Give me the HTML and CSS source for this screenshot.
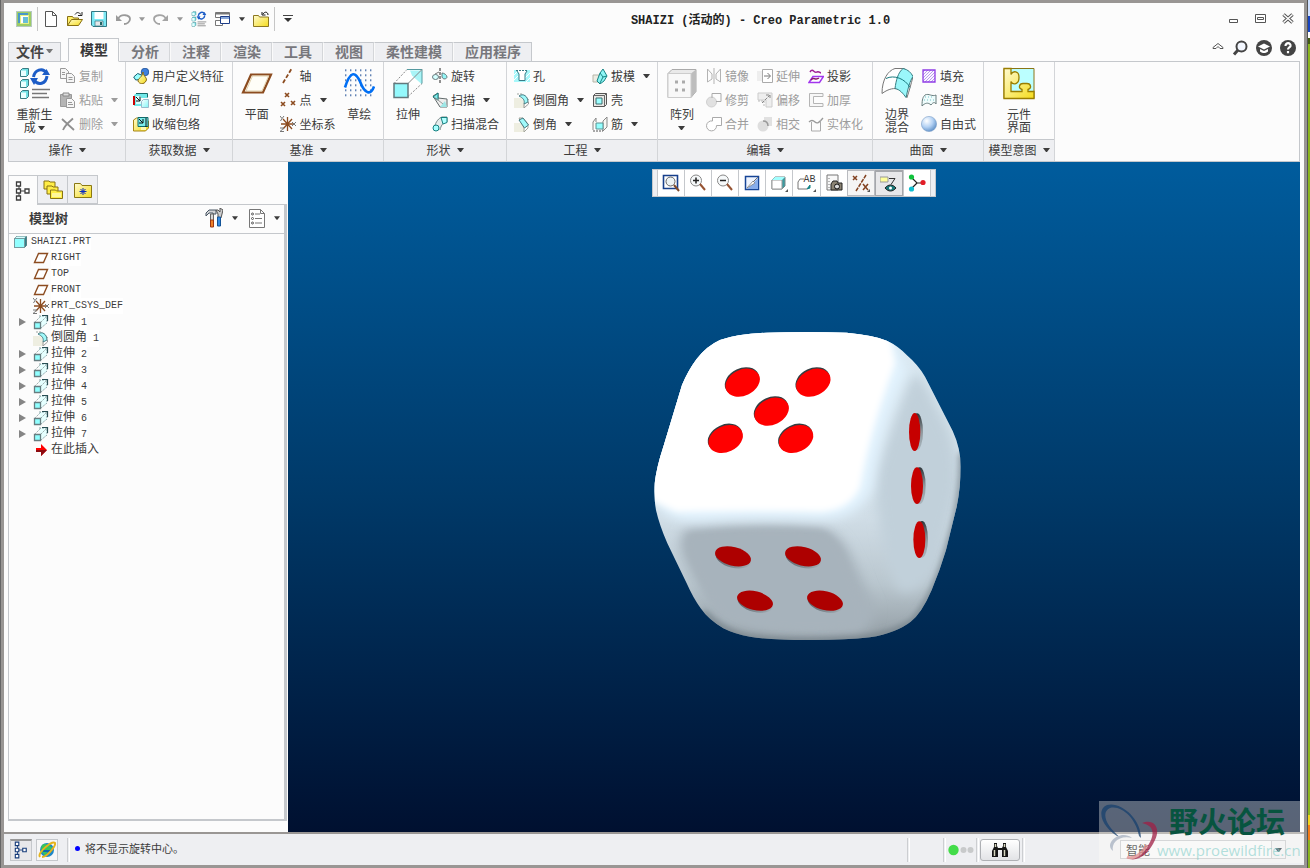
FILE: index.html
```
<!DOCTYPE html>
<html lang="zh-CN">
<head>
<meta charset="utf-8">
<title>SHAIZI (活动的) - Creo Parametric 1.0</title>
<link rel="stylesheet" href="styles.css">
</head>
<body>
<svg class="defs" aria-hidden="true">
  <defs>
    <linearGradient id="gYellow" x1="0" y1="0" x2="1" y2="1"><stop offset="0" stop-color="#fffbd0"/><stop offset="1" stop-color="#f5dc1c"/></linearGradient>
    <linearGradient id="gCyan" x1="0" y1="0" x2="1" y2="1"><stop offset="0" stop-color="#ffffff"/><stop offset="1" stop-color="#7ff6f6"/></linearGradient>
    <radialGradient id="gBall" cx=".35" cy=".3" r=".8"><stop offset="0" stop-color="#ffffff"/><stop offset=".5" stop-color="#b4d2f4"/><stop offset="1" stop-color="#5286c0"/></radialGradient>
    <pattern id="pDots" width="5" height="5" patternUnits="userSpaceOnUse"><rect x="2" y="2" width="1.400" height="1.400" fill="#1f4f96"/></pattern>
    <pattern id="pHatch" width="3" height="3" patternUnits="userSpaceOnUse"><path d="M0 3L3 0" stroke="#a884e8" stroke-width=".8"/></pattern>
  </defs>
  <symbol id="arrow" viewBox="0 0 7 4"><path d="M0 0h7L4 4H3z" fill="currentColor"/></symbol>
  <symbol id="new" viewBox="0 0 16 16"><path d="M2.500 .5h7l4 4v11h-11zM9.500 .5v4h4" fill="#fff" stroke="#555"/></symbol>
  <symbol id="open" viewBox="0 0 16 16"><path d="M.5 14.500v-9h5l1 1.500h5v2" fill="#ffef6a" stroke="#876f14"/><path d="M.5 14.500l4-6h11l-4 6z" fill="url(#gYellow)" stroke="#876f14"/><path d="M8 3.500c2-3 4-2 6 0M15 1v3.500h-4" fill="none" stroke="#222"/></symbol>
  <symbol id="save" viewBox="0 0 16 16"><path d="M.5 .5h15v15H2l-1.500-1.500z" fill="#7ce8f4" stroke="#347783"/><path d="M3.500 1h9v7h-9z" fill="#fff"/><path d="M4 10h8v5H4z" fill="#e4e8ea" stroke="#347783" stroke-width=".7"/><path d="M9 11h2v3H9z" fill="#266"/></symbol>
  <symbol id="undo" viewBox="0 0 16 16"><path d="M3 8c3-6 12-4 12 0 0 3-3 5-6 5" fill="none" stroke="#9a9a9a" stroke-width="1.800"/><path d="M1 4v6h6z" fill="#9a9a9a"/></symbol>
  <symbol id="redo" viewBox="0 0 16 16"><path d="M13 8C10 2 1 4 1 8c0 3 3 5 6 5" fill="none" stroke="#a4a4a4" stroke-width="1.800"/><path d="M15 4v6H9z" fill="#a4a4a4"/></symbol>
  <symbol id="regen" viewBox="0 0 32 33"><g stroke="#397b82" fill="#6fe0e4"><path d="M1.500 3.500l2-2h6v6l-2 2h-6z"/><path d="M1.500 14.500l2-2h6v6l-2 2h-6z"/><path d="M1.500 25.500l2-2h6v6l-2 2h-6z"/></g><g fill="#e9ffff"><path d="M2 3.500h5v5.500H2zM2 14.500h5v5.500H2zM2 25.500h5v5.500H2z"/></g><path d="M14.500 10c1-7 9-10 13-4M28 9c-1 8-9 10-13 4" fill="none" stroke="#1d5dc7" stroke-width="3"/><path d="M23 8h8l-3.500-6zM11 11h8l-4 7z" fill="#1d5dc7"/><path d="M13 22.500h18M13 26.500h15M13 30.500h17" stroke="#777" stroke-width="1.600"/></symbol>
  <symbol id="windows" viewBox="0 0 16 16"><path d="M.5 1.500h14v5H.5zM.5 9.500h7v5h-7z" fill="#fff" stroke="#777"/><path d="M1 2h13v1.500H1z" fill="#777"/><path d="M5.500 5.500h9v7h-9z" fill="#fff" stroke="#1d3d88"/><path d="M6 6h8v2H6z" fill="#89a9da"/></symbol>
  <symbol id="closeFolder" viewBox="0 0 16 16"><path d="M.5 15.500v-11h5l1 1.500h9v9.500z" fill="url(#gYellow)" stroke="#8d7820"/><path d="M10 3c2-3 5-2 5 1M9 1v3h3.500" fill="none" stroke="#111"/></symbol>
  <symbol id="copy" viewBox="0 0 16 16"><g fill="#f5f5f5" stroke="#999"><path d="M.5 .5h5l3 3v7h-8z"/><path d="M6.500 5.500h5l3 3v6h-8z"/></g><path d="M2 4.500h3M2 6.500h3M8.500 9.500h4M8.500 11.500h4" stroke="#999"/></symbol>
  <symbol id="paste" viewBox="0 0 16 16"><path d="M.5 2.500h11v12H.5z" fill="#b4b4b4" stroke="#999"/><path d="M3 1h6v3H3z" fill="#ddd" stroke="#888"/><path d="M6.500 6.500h5l3 3v6h-8z" fill="#f6f6f6" stroke="#999"/><path d="M8 10.500h4M8 12.500h5" stroke="#999"/></symbol>
  <symbol id="delete" viewBox="0 0 16 16"><path d="M2 3l12 11M13 2.500C9 6 5 9 3 14" fill="none" stroke="#8f8f8f" stroke-width="1.800"/></symbol>
  <symbol id="udf" viewBox="0 0 16 16"><circle cx="12" cy="4" r="3.800" fill="#3f80dc" stroke="#174a91" stroke-width=".8"/><path d="M.7 9l4-3.500 5 2-2 4-5 .5z" fill="#9ff" stroke="#125e70"/><path d="M10 4c0 4 5 6 3 9-2 4-7 3-8 0 0-3 4-3 5-9z" fill="url(#gYellow)" stroke="#866812"/></symbol>
  <symbol id="copyGeom" viewBox="0 0 16 16"><path d="M1 3l3-2h10v5H8v8H1z" fill="#71e8e8"/><path d="M3 1.500h11.500v4" fill="none" stroke="#176969"/><path d="M1 4v9" stroke="#c00" stroke-width="2"/><path d="M3 4h5v8H3z" fill="#d9ffff"/><path d="M3 5l4 4M7 4.500V9H3" stroke="#111" fill="none"/><path d="M8.500 9.500l2-2h5v8h-7z" fill="url(#gCyan)" stroke="#9bc"/></symbol>
  <symbol id="shrink" viewBox="0 0 16 16"><path d="M.5 4l3-2h3v3h9v7l-3 3H.5z" fill="url(#gYellow)" stroke="#a68415"/><path d="M5 1.500h10v9H5z" fill="#7aecec" stroke="#126a6a"/><path d="M6 3l4 4M10 3v4H6M13 2v9" stroke="#111" fill="none"/><path d="M8 11h5v3H8z" fill="#fff8b0"/></symbol>
  <symbol id="plane" viewBox="0 0 32 24"><path d="M2 21L10 3h20l-8 18z" fill="#fffef8" stroke="#8c4c20" stroke-width="2.200"/><path d="M5 19.500L11.500 4.500h16L21 19.500z" fill="none" stroke="#d9c59a" stroke-width=".8"/></symbol>
  <symbol id="axis" viewBox="0 0 16 16"><path d="M3 15L12 0" stroke="#8c4c20" stroke-width="1.800" stroke-dasharray="4 2"/></symbol>
  <symbol id="points" viewBox="0 0 16 16"><path d="M5 1l4 4m0-4L5 5M1 10l4 4m0-4l-4 4M11 9l4 4m0-4l-4 4" stroke="#8c4c20" stroke-width="1.600"/></symbol>
  <symbol id="csys" viewBox="0 0 16 16"><path d="M1 8h12M7.500 1v14M3 3l9 10M12 3L3 13" stroke="#8c4c20" stroke-width="1.300"/><path d="M0 0l2 2.500L4 0M2 2.500L.5 5M12 6l4 4m0-4l-4 4M0 12h4l-4 3.500h4" fill="none" stroke="#777"/></symbol>
  <symbol id="sketch" viewBox="0 0 32 32"><path d="M1 1h30v30H1z" fill="url(#pDots)"/><path d="M2 20C7 4 12 3 17 14c5 13 11 14 14 5" fill="none" stroke="#006ff5" stroke-width="2.600"/></symbol>
  <symbol id="extrude" viewBox="0 0 32 32"><path d="M14 3L2 16v14l14-13zM16 17h14V3H15z" fill="#fff"/><path d="M18 3h12v14L20 8z" fill="#a9f5f7"/><path d="M2 16L15 2M16 29L30 16" stroke="#888" stroke-dasharray="2 1.500"/><path d="M15 2h15v14" fill="none" stroke="#559aa0"/><path d="M16 16L30 2" stroke="#888"/><path d="M2 16h14v14H2z" fill="#94f9fc" stroke="#63797d" stroke-width="1.500"/></symbol>
  <symbol id="extrudeS" viewBox="0 0 16 16"><path d="M6 2h8v7L8 14" fill="#e5ffff" stroke="#90a6aa" stroke-dasharray="2 1"/><path d="M9 1.500h5.500V7" fill="none" stroke="#274e54" stroke-width="1.200"/><path d="M1.500 8.500h6v6h-6z" fill="#90ffff" stroke="#687d80" stroke-width="1.300"/><path d="M2 8l6-6M8 8l6-6" stroke="#9aa" stroke-dasharray="2 1"/></symbol>
  <symbol id="revolve" viewBox="0 0 16 16"><path d="M8 0v16" stroke="#222" stroke-dasharray="3 1"/><path d="M10 5c2 0 5 2 5 4s-4 3-5 0z" fill="#93f6f6" stroke="#66797c"/><ellipse cx="3.500" cy="9" rx="3" ry="2.500" fill="#d5ffff" stroke="#66797c"/><path d="M3 6l4-2" stroke="#777"/></symbol>
  <symbol id="sweep" viewBox="0 0 16 16"><path d="M1 4l5-3v5l9 1v8H8z" fill="#eee" stroke="#626b6c"/><path d="M1 5l5-4v7z" fill="#82eeee" stroke="#137878"/><path d="M2 5l13 10" stroke="#999"/><path d="M8 15l5-6 2 6z" fill="#9ee7e7"/></symbol>
  <symbol id="sweepBlend" viewBox="0 0 16 16"><path d="M2 12C4 5 7 2 10 1h5v5c-5 1-6 4-7 8" fill="#e7ecec" stroke="#788"/><path d="M9 1.500h6v5L11 8z" fill="#b2ffff" stroke="#168080"/><circle cx="4" cy="12" r="3" fill="#a7ffff" stroke="#168080"/></symbol>
  <symbol id="hole" viewBox="0 0 16 16"><path d="M0 2h16v12H0z" fill="#a6f7fa"/><path d="M0 7l4-4M0 12L4 8M11 10l5-5M12 14l4-4" stroke="#fff"/><path d="M3 2h10l-2 4v7H5V6z" fill="#fff"/><path d="M2 2.500h12" stroke="#397c87" stroke-dasharray="2 1"/><path d="M3 3l2 3v6.500h6V6l2-3" fill="none" stroke="#397c87"/></symbol>
  <symbol id="round" viewBox="0 0 16 16"><path d="M0 6h8l3 6-1 4H0z" fill="#eeeee1"/><path d="M3 2h5l7 6" fill="none" stroke="#a1a6a0" stroke-dasharray="2 1"/><path d="M5 4c4-3 9 0 9 6l-4 2c1-4-1-6-5-8z" fill="#9ff9fa" stroke="#477b82"/><path d="M10 12v4l4.500-4v-2" fill="none" stroke="#999"/></symbol>
  <symbol id="chamfer" viewBox="0 0 16 16"><path d="M0 7h8l3 5-1 4H0z" fill="#eeeee1"/><path d="M5 2h4l5 6v4l-4 4v-4z" fill="#fff" stroke="#a4a69c"/><path d="M5 4l4-2 5.500 7-4 3z" fill="#9ff9fa" stroke="#477b82"/></symbol>
  <symbol id="draft" viewBox="0 0 16 16"><path d="M1 7h6v7H1z" fill="#ecece3" stroke="#b6b6a9"/><path d="M5 13L8 5l3-4 4 7-3 5-4 3z" fill="#8df5f5" stroke="#168484"/><path d="M8 5l3 4 4-1M11 9l-3 6" fill="none" stroke="#168484"/></symbol>
  <symbol id="shell" viewBox="0 0 16 16"><path d="M1.500 3.500l2-2h11v11l-2 2h-11z" fill="#e8e8e5" stroke="#555"/><path d="M1.500 3.500h11v11M12.500 3.500l2-2" fill="none" stroke="#666"/><path d="M4 6h6v6H4z" fill="#9cffff" stroke="#3e6f70"/></symbol>
  <symbol id="rib" viewBox="0 0 16 16"><path d="M1 14V6l3-4v4M11 5l4-4v10l-4 4z" fill="#f8f8f4" stroke="#888"/><path d="M4 7h7v6H4z" fill="#93ffff" stroke="#5b9090"/><path d="M1 15h10" stroke="#555" stroke-dasharray="2 1"/></symbol>
  <symbol id="pattern" viewBox="0 0 32 32"><path d="M2 6l4-4h24v22l-5 6H2z" fill="#e9e9e9" stroke="#aaa"/><path d="M25 6l5-4v22l-5 6z" fill="#bdbdbd"/><path d="M2 6h23v24H2z" fill="#f8f8f8" stroke="#ccc"/><g fill="#aaa"><path d="M9 13h3v3H9zM16 13h3v3h-3zM9 21h3v3H9zM16 21h3v3h-3z"/></g></symbol>
  <symbol id="mirror" viewBox="0 0 16 16"><path d="M1.500 1v13L6 11V6zM14.500 1v13L10 11V6zM8 0v16" fill="none" stroke="#b3b3b3"/></symbol>
  <symbol id="trim" viewBox="0 0 16 16"><circle cx="5.500" cy="10" r="5" fill="#e1e1e1" stroke="#d0d0d0"/><path d="M6 6V1.500h9v8h-5" fill="none" stroke="#aaa"/></symbol>
  <symbol id="merge" viewBox="0 0 16 16"><path d="M6.500 5V1.500h9v8h-5A5 5 0 1 1 6.500 5z" fill="#fff" stroke="#aaa"/></symbol>
  <symbol id="extend" viewBox="0 0 16 16"><path d="M0 3h5v10H0z" fill="#eee"/><path d="M5.500 1.500h10v13h-10z" fill="#fff" stroke="#aaa"/><path d="M7 8h6M10.500 5l3 3-3 3" fill="none" stroke="#777"/></symbol>
  <symbol id="offset" viewBox="0 0 16 16"><path d="M1 1h14v14H9V8H1z" fill="#eee" stroke="#ccc"/><path d="M1 9h6v6" fill="none" stroke="#bbb" stroke-dasharray="2 1"/><path d="M5 11l8-8M9 3h4v4" stroke="#888" fill="none" stroke-dasharray="3 1"/></symbol>
  <symbol id="intersect" viewBox="0 0 16 16"><path d="M7 1h8v9H7z" fill="#e1e1e1"/><circle cx="6" cy="10" r="5.500" fill="#dedede"/><path d="M6 5c3 0 5 2 5 5" fill="none" stroke="#999" stroke-width="1.500"/></symbol>
  <symbol id="project" viewBox="0 0 16 16"><path d="M2 4c3-5 4 2 7 0 2-1 3 1 4 1" fill="none" stroke="#a01e96" stroke-width="1.500"/><path d="M1 14.500l4-6h10.500l-4 6z" fill="#fff" stroke="#a235ed" stroke-width="1.500"/><path d="M3 12c3-4 4 1 8-2" fill="none" stroke="#8b1a69" stroke-width="1.500"/></symbol>
  <symbol id="thicken" viewBox="0 0 16 16"><path d="M15 1.500H1.500v13H15v-3H5.500v-7H15z" fill="#f7f7f7" stroke="#b5b5b5"/></symbol>
  <symbol id="solidify" viewBox="0 0 16 16"><path d="M1 6c2-2 4-2 6 0s4 1 8-4" fill="none" stroke="#999" stroke-width="1.300"/><path d="M3.500 6v9h9V4" fill="none" stroke="#aaa"/></symbol>
  <symbol id="boundary" viewBox="0 0 32 32"><path d="M1 26C1 12 7 3 14 1h9l9 8c-2 8-4 15-6 21-5-10-14-12-25-4z" fill="#fff" stroke="#777"/><path d="M22 1c5 1 8 4 10 8-3 4-5 12-7 21-3-4-6-8-11-9 1-8 3-16 8-20z" fill="#9af7fa" stroke="#397e83"/><path d="M5 11c8-4 19 0 24 9" fill="none" stroke="#17797d"/></symbol>
  <symbol id="fill" viewBox="0 0 16 16"><path d="M2 2h12v12H2z" fill="#faf7ff"/><path d="M2 2h12v12H2z" fill="url(#pHatch)" stroke="#8e3ce5" stroke-width="1.300"/></symbol>
  <symbol id="style" viewBox="0 0 16 16"><path d="M1 14c0-7 1-9 3-11 4-2 7 2 11 0v9c-1-2-3-2-5 1-3-3-6-2-9 1z" fill="#effcfc" stroke="#677c7d"/><path d="M4 5h9M3 8h10" stroke="#74c5c9" stroke-dasharray="1 2"/></symbol>
  <symbol id="ball" viewBox="0 0 16 16"><circle cx="8" cy="8" r="7.600" fill="url(#gBall)" stroke="#7e9fc8" stroke-width=".6"/></symbol>
  <symbol id="puzzle" viewBox="0 0 32 32"><path d="M1 1h30v30H1z" fill="#bff" stroke="#8a7516"/><path d="M1 1h7v6c2-4 8-4 8 3s-6 8-8 4v10h11v-2c-4-1-3-6 1-6h4c4 0 5 5 1 6v2h6v7H1z" fill="url(#gYellow)" stroke="#9a7e00" stroke-width="1.300"/></symbol>
  <symbol id="tree" viewBox="0 0 16 20"><path d="M4 5v10M4 10h6" stroke="currentColor"/><g fill="#fff" stroke="currentColor" stroke-width="1.300"><path d="M1.500 1h4v4h-4zM1.500 8h4v4h-4zM1.500 15h4v4h-4zM10 8h4v4h-4z"/></g></symbol>
  <symbol id="folders" viewBox="0 0 20 20"><g fill="#ffee46" stroke="#887313"><path d="M1 9V1h5l1 1h5v7z"/><path d="M4 14V6h5l1 1h5v7z"/><path d="M7.500 18.500V10h5l1 1h6v7.500z"/></g><path d="M9 13h9v4H9z" fill="#fff69c"/></symbol>
  <symbol id="favorites" viewBox="0 0 18 16"><path d="M.5 15.500v-14h6l1.500 2h9.500v12z" fill="url(#gYellow)" stroke="#8a7812"/><path d="M9 6v7M5.500 9.500h7M6.500 7l5 5M11.500 7l-5 5" stroke="#0929bd"/></symbol>
  <symbol id="tools" viewBox="0 0 18 20"><path d="M1 5l3-3h7v4H8v-1H4L1 8z" fill="#d2d3d6" stroke="#465462"/><path d="M5.500 6h3v7h-3z" fill="#d7d7d7" stroke="#666"/><path d="M5.500 12h3v7h-3z" fill="#ef8128" stroke="#9a3715"/><path d="M13 10V6l-2-4h2l2 2V0l3 2-1 4-1 4" fill="#ccc" stroke="#555"/><path d="M12.500 9h3v9h-3z" fill="#348be3" stroke="#125397"/></symbol>
  <symbol id="list" viewBox="0 0 16 19"><path d="M.5.5h11l4 4v14H.5zM11.500.5v4h4" fill="#fff" stroke="#777"/><path d="M6 5h5M6 9.500h7M6 14h7" stroke="#777"/><g fill="#fff" stroke="#555"><circle cx="3.500" cy="5" r="1"/><circle cx="3.500" cy="9.500" r="1"/><circle cx="3.500" cy="14" r="1"/></g></symbol>
  <symbol id="part" viewBox="0 0 16 16"><path d="M1.500 4.500l2-2h10v9l-2 2h-10z" fill="#30828a" stroke="#588085"/><path d="M1.500 4.500h10v9h-10z" fill="#92ffff" stroke="#759b9f"/><path d="M2 4l2-1.500h9L11.500 4z" fill="#d8ffff"/></symbol>
  <symbol id="planeS" viewBox="0 0 16 16"><path d="M1.500 12.500l4-9h9l-4 9z" fill="#fff" stroke="#8c4c20" stroke-width="1.400"/></symbol>
  <symbol id="insert" viewBox="0 0 16 16"><path d="M3 6h5V2l6 6-6 6v-4H3z" fill="#f00"/><path d="M3 8h11l-6 6v-4H3z" fill="#8d0b10"/></symbol>
  <symbol id="refit" viewBox="0 0 18 18"><path d="M1.500 1.500h14v13h-14z" fill="#fff" stroke="#173f8b" stroke-width="1.600"/><circle cx="8.500" cy="7.500" r="4.500" fill="#edf3f5" stroke="#666"/><path d="M12 11l5 6" stroke="#7d492a" stroke-width="2"/></symbol>
  <symbol id="zoomIn" viewBox="0 0 18 18"><circle cx="7" cy="6.500" r="5.500" fill="#f6f9fa" stroke="#888"/><path d="M11 10l5 6" stroke="#965332" stroke-width="2"/><path d="M4 6.500h6M7 3.500v6" stroke="#222" stroke-width="1.500"/></symbol>
  <symbol id="zoomOut" viewBox="0 0 18 18"><circle cx="7" cy="6.500" r="5.500" fill="#f6f9fa" stroke="#888"/><path d="M11 10l5 6" stroke="#965332" stroke-width="2"/><path d="M4 6.500h6" stroke="#222" stroke-width="1.500"/></symbol>
  <symbol id="repaint" viewBox="0 0 18 18"><path d="M2.500 2.500h13v13h-13z" fill="#eef4ff" stroke="#174596" stroke-width="1.500"/><path d="M15 4L4 15h11z" fill="#87adeb"/><path d="M4 14l6-7 2 2z" fill="#fff" stroke="#777" stroke-width=".7"/><path d="M10 8l5-5" stroke="#777"/></symbol>
  <symbol id="display" viewBox="0 0 18 18"><path d="M2 6l3-3h10v9l-3 3H2z" fill="#3b9ca2" stroke="#788"/><path d="M2 6h10v9H2z" fill="#fff" stroke="#999"/><path d="M2 6l3-3h10l-3 3z" fill="#a3ffff"/><path d="M18 15v3h-3z" fill="#555"/></symbol>
  <symbol id="saved" viewBox="0 0 20 18"><path d="M1 15V8l2-3h4M1 15h9l3-3" fill="none" stroke="#777"/><path d="M10 15l3-4v3z" fill="#178689" stroke="#178689"/><path d="M19 15v3h-3z" fill="#555"/></symbol>
  <symbol id="camera" viewBox="0 0 18 18"><path d="M2 1h11v15H2z" fill="#f8f8f8" stroke="#777"/><path d="M4 4v10" stroke="#777" stroke-dasharray="1 2"/><path d="M6 10l2-3h4l1 2h4v7H6z" fill="#8b8474" stroke="#222"/><circle cx="12" cy="12.500" r="2.500" fill="#ddd" stroke="#111"/></symbol>
  <symbol id="datums" viewBox="0 0 18 18"><path d="M1 2l4 4m0-4L1 6M11 10l5 6m0-6l-5 6" stroke="#824221" stroke-width="1.500"/><path d="M4 17L14 1" stroke="#824221" stroke-width="1.500" stroke-dasharray="4 1"/><path d="M18 15v3h-3z" fill="#555"/></symbol>
  <symbol id="annot" viewBox="0 0 18 18"><path d="M0 2h8v5H0z" fill="#ffff9a" stroke="#999"/><path d="M9 3.500h6l-4 6" fill="none" stroke="#333"/><path d="M5 13c3-4 8-4 11 0-3 4-8 4-11 0z" fill="#197777" stroke="#222"/><circle cx="10.500" cy="13" r="1.500" fill="#fff"/></symbol>
  <symbol id="spin" viewBox="0 0 18 18"><path d="M3 3l6 6h6M9 9l-6 6" fill="none" stroke="#222" stroke-width="1.200"/><circle cx="3.500" cy="3" r="2.600" fill="#10c23c"/><circle cx="15" cy="8.500" r="2.600" fill="#e21d27"/><circle cx="3.500" cy="15" r="2.600" fill="#10bed0"/></symbol>
</svg>

<div class="window">
  <header class="titlebar">
    <div class="quick">
      <svg class="i16" viewBox="0 0 16 16"><path d="M0 0h16v16H0z" fill="#b5c9c0"/><path d="M1 1h14v14H1z" fill="#9dcc65"/><path d="M2 2h10v10H2z" fill="#4898c8"/><path d="M4 4h9v9H4z" fill="#e8ef85"/><path d="M5 5h7v7H5z" fill="#fff"/><path d="M7 6h5v6H7z" fill="#68bdd8"/></svg>
      <span class="vline"></span>
      <button aria-label="新建"><svg class="i16"><use href="#new"/></svg></button>
      <button aria-label="打开"><svg class="i16"><use href="#open"/></svg></button>
      <button aria-label="保存"><svg class="i16"><use href="#save"/></svg></button>
      <button aria-label="撤消"><svg class="i16"><use href="#undo"/></svg></button>
      <button class="off" aria-label="撤消列表"><svg class="arr6"><use href="#arrow"/></svg></button>
      <button aria-label="重做"><svg class="i16"><use href="#redo"/></svg></button>
      <button class="off" aria-label="重做列表"><svg class="arr6"><use href="#arrow"/></svg></button>
      <button aria-label="重新生成模型"><svg class="i16"><use href="#regen"/></svg></button>
      <button aria-label="窗口"><svg class="i16"><use href="#windows"/></svg></button>
      <button aria-label="窗口列表"><svg class="arr6"><use href="#arrow"/></svg></button>
      <button aria-label="关闭"><svg class="i16"><use href="#closeFolder"/></svg></button>
      <span class="vline"></span>
      <button class="customize" aria-label="自定义"><svg width="10" height="8" viewBox="0 0 10 8"><path d="M0 .5h10" stroke="#444"/><path d="M1 3h8L5 7z" fill="#333"/></svg></button>
    </div>
    <h1>SHAIZI (活动的) - Creo Parametric 1.0</h1>
    <div class="winbtns">
      <button aria-label="最小化"><svg width="12" height="12" viewBox="0 0 12 12"><path d="M1.500 6.500h8v3h-8z" fill="#fff" stroke="#555"/></svg></button>
      <button aria-label="最大化"><svg width="12" height="12" viewBox="0 0 12 12"><path d="M.5 1.500h10v8H.5zM2.500 4.500h6v2h-6z" fill="#fff" stroke="#555"/></svg></button>
      <button aria-label="关闭窗口"><svg width="12" height="12" viewBox="0 0 12 12"><path d="M1.500 1.500l9 8m0-8l-9 8" stroke="#555" stroke-width="3.500"/><path d="M1.500 1.500l9 8m0-8l-9 8" stroke="#fff" stroke-width="1.500"/></svg></button>
    </div>
  </header>

  <nav class="tabs">
    <button class="tab file">文件<svg class="arr"><use href="#arrow"/></svg></button>
    <button class="tab active">模型</button>
    <button class="tab">分析</button>
    <button class="tab">注释</button>
    <button class="tab">渲染</button>
    <button class="tab">工具</button>
    <button class="tab">视图</button>
    <button class="tab">柔性建模</button>
    <button class="tab">应用程序</button>
    <div class="help">
      <button aria-label="最小化功能区"><svg width="12" height="12" viewBox="0 0 12 12"><path d="M1 5.500l5-4 5 4v1H8L6 4.500l-2 2H1z" fill="#fff" stroke="#555"/></svg></button>
      <button aria-label="搜索"><svg class="i16" viewBox="0 0 16 16"><circle cx="9.500" cy="6.500" r="5" fill="#f3f7ff" stroke="#444" stroke-width="2"/><path d="M6 10l-4 4.500" stroke="#444" stroke-width="3"/></svg></button>
      <button aria-label="学习"><svg class="i16" viewBox="0 0 16 16"><circle cx="8" cy="8" r="8" fill="#444"/><path d="M2 6.500l6-3 6 3-6 3z" fill="#fff"/><path d="M4 9v2.500c3 2 5 2 8 0V9l-4 2z" fill="#fff"/></svg></button>
      <button aria-label="帮助"><svg class="i16" viewBox="0 0 16 16"><circle cx="8" cy="8" r="8" fill="#444"/><path d="M5.500 6c0-4 5.500-3.500 5 0-.3 1.500-2.500 1.500-2.500 3.500M8 11v2.200" fill="none" stroke="#fff" stroke-width="2.200"/></svg></button>
    </div>
  </nav>

  <section class="ribbon">
    <div class="group g-op">
      <div class="body">
        <button class="big"><svg><use href="#regen"/></svg><span>重新生<br>成 <svg class="arr"><use href="#arrow"/></svg></span></button>
        <div class="col off">
          <button><svg class="i16"><use href="#copy"/></svg>复制</button>
          <button><svg class="i16"><use href="#paste"/></svg>粘贴<svg class="arr"><use href="#arrow"/></svg></button>
          <button><svg class="i16"><use href="#delete"/></svg>删除<svg class="arr"><use href="#arrow"/></svg></button>
        </div>
      </div>
      <button class="caption">操作<svg class="arr"><use href="#arrow"/></svg></button>
    </div>
    <div class="group g-get">
      <div class="body pad">
        <div class="col">
          <button><svg class="i16"><use href="#udf"/></svg>用户定义特征</button>
          <button><svg class="i16"><use href="#copyGeom"/></svg>复制几何</button>
          <button><svg class="i16"><use href="#shrink"/></svg>收缩包络</button>
        </div>
      </div>
      <button class="caption">获取数据<svg class="arr"><use href="#arrow"/></svg></button>
    </div>
    <div class="group g-datum">
      <div class="body">
        <button class="big"><svg><use href="#plane"/></svg><span>平面</span></button>
        <div class="col">
          <button><svg class="i16"><use href="#axis"/></svg>轴</button>
          <button><svg class="i16"><use href="#points"/></svg>点<svg class="arr"><use href="#arrow"/></svg></button>
          <button><svg class="i16"><use href="#csys"/></svg>坐标系</button>
        </div>
        <button class="big"><svg><use href="#sketch"/></svg><span>草绘</span></button>
      </div>
      <button class="caption">基准<svg class="arr"><use href="#arrow"/></svg></button>
    </div>
    <div class="group g-shape">
      <div class="body">
        <button class="big"><svg><use href="#extrude"/></svg><span>拉伸</span></button>
        <div class="col">
          <button><svg class="i16"><use href="#revolve"/></svg>旋转</button>
          <button><svg class="i16"><use href="#sweep"/></svg>扫描<svg class="arr"><use href="#arrow"/></svg></button>
          <button><svg class="i16"><use href="#sweepBlend"/></svg>扫描混合</button>
        </div>
      </div>
      <button class="caption">形状<svg class="arr"><use href="#arrow"/></svg></button>
    </div>
    <div class="group g-eng">
      <div class="body pad">
        <div class="col">
          <button><svg class="i16"><use href="#hole"/></svg>孔</button>
          <button><svg class="i16"><use href="#round"/></svg>倒圆角<svg class="arr"><use href="#arrow"/></svg></button>
          <button><svg class="i16"><use href="#chamfer"/></svg>倒角<svg class="arr"><use href="#arrow"/></svg></button>
        </div>
        <div class="col">
          <button><svg class="i16"><use href="#draft"/></svg>拔模<svg class="arr"><use href="#arrow"/></svg></button>
          <button><svg class="i16"><use href="#shell"/></svg>壳</button>
          <button><svg class="i16"><use href="#rib"/></svg>筋<svg class="arr"><use href="#arrow"/></svg></button>
        </div>
      </div>
      <button class="caption">工程<svg class="arr"><use href="#arrow"/></svg></button>
    </div>
    <div class="group g-edit">
      <div class="body">
        <button class="big"><svg><use href="#pattern"/></svg><span>阵列<br><svg class="arr"><use href="#arrow"/></svg></span></button>
        <div class="col off">
          <button><svg class="i16"><use href="#mirror"/></svg>镜像</button>
          <button><svg class="i16"><use href="#trim"/></svg>修剪</button>
          <button><svg class="i16"><use href="#merge"/></svg>合并</button>
        </div>
        <div class="col off">
          <button><svg class="i16"><use href="#extend"/></svg>延伸</button>
          <button><svg class="i16"><use href="#offset"/></svg>偏移</button>
          <button><svg class="i16"><use href="#intersect"/></svg>相交</button>
        </div>
        <div class="col off">
          <button class="on"><svg class="i16"><use href="#project"/></svg>投影</button>
          <button><svg class="i16"><use href="#thicken"/></svg>加厚</button>
          <button><svg class="i16"><use href="#solidify"/></svg>实体化</button>
        </div>
      </div>
      <button class="caption">编辑<svg class="arr"><use href="#arrow"/></svg></button>
    </div>
    <div class="group g-surf">
      <div class="body">
        <button class="big"><svg><use href="#boundary"/></svg><span>边界<br>混合</span></button>
        <div class="col">
          <button><svg class="i16"><use href="#fill"/></svg>填充</button>
          <button><svg class="i16"><use href="#style"/></svg>造型</button>
          <button><svg class="i16"><use href="#ball"/></svg>自由式</button>
        </div>
      </div>
      <button class="caption">曲面<svg class="arr"><use href="#arrow"/></svg></button>
    </div>
    <div class="group g-intent">
      <div class="body center">
        <button class="big"><svg><use href="#puzzle"/></svg><span>元件<br>界面</span></button>
      </div>
      <button class="caption">模型意图<svg class="arr"><use href="#arrow"/></svg></button>
    </div>
  </section>

  <main>
    <aside>
      <div class="side-tabs">
        <button class="active" aria-label="模型树"><svg width="16" height="20"><use href="#tree"/></svg></button>
        <button aria-label="文件夹浏览器"><svg width="20" height="20"><use href="#folders"/></svg></button>
        <button aria-label="收藏夹"><svg width="18" height="16"><use href="#favorites"/></svg></button>
      </div>
      <div class="panel">
        <div class="panel-head">
          <h2>模型树</h2>
          <button aria-label="设置"><svg width="18" height="20"><use href="#tools"/></svg><svg class="arr6"><use href="#arrow"/></svg></button>
          <button aria-label="显示"><svg width="16" height="19"><use href="#list"/></svg><svg class="arr6"><use href="#arrow"/></svg></button>
        </div>
        <ul class="tree">
          <li class="root"><svg class="i16"><use href="#part"/></svg><span>SHAIZI.PRT</span></li>
          <li><svg class="i16"><use href="#planeS"/></svg><span>RIGHT</span></li>
          <li><svg class="i16"><use href="#planeS"/></svg><span>TOP</span></li>
          <li><svg class="i16"><use href="#planeS"/></svg><span>FRONT</span></li>
          <li><svg class="i16"><use href="#csys"/></svg><span>PRT_CSYS_DEF</span></li>
          <li class="more"><svg class="i16"><use href="#extrudeS"/></svg><span><em>拉伸</em> 1</span></li>
          <li><svg class="i16"><use href="#round"/></svg><span><em>倒圆角</em> 1</span></li>
          <li class="more"><svg class="i16"><use href="#extrudeS"/></svg><span><em>拉伸</em> 2</span></li>
          <li class="more"><svg class="i16"><use href="#extrudeS"/></svg><span><em>拉伸</em> 3</span></li>
          <li class="more"><svg class="i16"><use href="#extrudeS"/></svg><span><em>拉伸</em> 4</span></li>
          <li class="more"><svg class="i16"><use href="#extrudeS"/></svg><span><em>拉伸</em> 5</span></li>
          <li class="more"><svg class="i16"><use href="#extrudeS"/></svg><span><em>拉伸</em> 6</span></li>
          <li class="more"><svg class="i16"><use href="#extrudeS"/></svg><span><em>拉伸</em> 7</span></li>
          <li><svg class="i16"><use href="#insert"/></svg><span><em>在此插入</em></span></li>
        </ul>
      </div>
    </aside>
    <div class="viewport">
      <div class="viewbar">
        <button aria-label="重新调整"><svg class="i18"><use href="#refit"/></svg></button>
        <button aria-label="放大"><svg class="i18"><use href="#zoomIn"/></svg></button>
        <button aria-label="缩小"><svg class="i18"><use href="#zoomOut"/></svg></button>
        <button aria-label="重画"><svg class="i18"><use href="#repaint"/></svg></button>
        <button aria-label="显示样式"><svg class="i18"><use href="#display"/></svg></button>
        <button class="views" aria-label="已保存方向"><svg class="i20"><use href="#saved"/></svg><span>AB</span></button>
        <button aria-label="视图管理器"><svg class="i18"><use href="#camera"/></svg></button>
        <button class="boxed" aria-label="基准显示过滤器"><svg class="i18"><use href="#datums"/></svg></button>
        <button class="pressed" aria-label="注释显示"><svg class="i18"><use href="#annot"/></svg></button>
        <button aria-label="旋转中心"><svg class="i18"><use href="#spin"/></svg></button>
      </div>
      <svg class="die" viewBox="-42 0 1008 990" role="img" aria-label="骰子模型">
        <defs>
          <clipPath id="body"><path d="M380 38Q500 34 620 38Q700 45 740 62Q775 78 800 105Q835 135 855 170L938 333Q962 385 962 440Q962 500 950 560L918 690Q900 750 875 810Q845 880 812 905Q770 938 690 952Q610 961 500 960Q390 960 330 950Q285 943 250 925Q205 898 182 865Q160 835 140 790L82 670Q58 615 48 570Q41 530 44 490Q50 440 70 380L126 195Q145 150 170 117Q200 78 240 60Q290 42 380 38Z"/></clipPath>
          <filter id="b8" x="-20%" y="-20%" width="140%" height="140%"><feGaussianBlur stdDeviation="10"/></filter>
          <filter id="b16" x="-20%" y="-20%" width="140%" height="140%"><feGaussianBlur stdDeviation="18"/></filter>
          <linearGradient id="side" x1="0" y1="0" x2="0" y2="1"><stop offset="0" stop-color="#dbeaf3"/><stop offset=".6" stop-color="#d0dde6"/><stop offset=".8" stop-color="#b9c6ce"/><stop offset=".97" stop-color="#929ca3"/></linearGradient>
          <linearGradient id="hole2" x1="0" y1="0" x2="0" y2="1"><stop offset="0" stop-color="#2d3438"/><stop offset=".5" stop-color="#8f989d"/><stop offset="1" stop-color="#a8b6bf"/></linearGradient>
          <linearGradient id="hole3" x1="0" y1="0" x2="1" y2="0"><stop offset="0" stop-color="#596268"/><stop offset="1" stop-color="#a2adb4"/></linearGradient>
        </defs>
        <g clip-path="url(#body)">
          <path d="M0 0h1000v990H0z" fill="url(#side)"/>
          <path d="M140 625Q350 605 545 622Q600 640 630 700L700 850Q715 910 660 940Q400 965 240 900Q180 820 130 715Q105 655 140 625Z" fill="#a7b3bc" filter="url(#b16)"/>
          <path d="M810 180Q750 330 710 450Q702 540 735 700Q750 780 780 815Q840 825 890 740L945 540Q965 430 925 325L855 190Q830 150 810 180Z" fill="#c1d0da" filter="url(#b16)"/>
          <path d="M150 642Q350 612 535 630Q580 640 610 700L665 850Q675 900 650 925Q400 945 250 895Q195 820 150 715Q132 665 150 642Z" fill="#a7b3bc" filter="url(#b8)"/>
          <path d="M0 480L60 570Q110 610 180 604Q350 592 540 600Q660 600 700 500Q720 330 800 150L740 20H0Z" fill="#e2f3fe" filter="url(#b16)"/>
          <path d="M0 520Q50 550 110 575Q350 570 540 575Q630 570 660 500Q690 330 765 130L740 0H0Z" fill="#fff" filter="url(#b8)"/>
          <path d="M965 400Q970 520 930 660Q890 820 820 903Q760 945 650 958Q470 970 330 955Q250 940 190 875" fill="none" stroke="#707d85" stroke-width="14" filter="url(#b8)"/>
        </g>
        <g fill="#343e42"><ellipse cx="306" cy="184" rx="54" ry="39" transform="rotate(-25 306 184)"/><ellipse cx="518" cy="184" rx="54" ry="39" transform="rotate(-25 518 184)"/><ellipse cx="393" cy="271" rx="54" ry="39" transform="rotate(-25 393 271)"/><ellipse cx="255" cy="353" rx="54" ry="39" transform="rotate(-25 255 353)"/><ellipse cx="466" cy="353" rx="54" ry="39" transform="rotate(-25 466 353)"/></g>
        <g fill="#f00"><ellipse cx="308" cy="188" rx="54" ry="39" transform="rotate(-25 308 188)"/><ellipse cx="520" cy="188" rx="54" ry="39" transform="rotate(-25 520 188)"/><ellipse cx="395" cy="275" rx="54" ry="39" transform="rotate(-25 395 275)"/><ellipse cx="257" cy="357" rx="54" ry="39" transform="rotate(-25 257 357)"/><ellipse cx="468" cy="357" rx="54" ry="39" transform="rotate(-25 468 357)"/></g>
        <g fill="url(#hole3)"><ellipse cx="280" cy="715" rx="54" ry="28" transform="rotate(14 280 715)"/><ellipse cx="490" cy="715" rx="54" ry="28" transform="rotate(14 490 715)"/><ellipse cx="346" cy="848" rx="54" ry="28" transform="rotate(14 346 848)"/><ellipse cx="556" cy="848" rx="54" ry="28" transform="rotate(14 556 848)"/></g>
        <g fill="#ad0000"><ellipse cx="279" cy="709" rx="55" ry="28" transform="rotate(14 279 709)"/><ellipse cx="489" cy="709" rx="55" ry="28" transform="rotate(14 489 709)"/><ellipse cx="345" cy="842" rx="55" ry="28" transform="rotate(14 345 842)"/><ellipse cx="555" cy="842" rx="55" ry="28" transform="rotate(14 555 842)"/></g>
        <g fill="url(#hole2)"><ellipse cx="831" cy="335" rx="18" ry="55"/><ellipse cx="839" cy="497" rx="18" ry="55"/><ellipse cx="846" cy="658" rx="18" ry="55"/></g>
        <g fill="#c60000"><ellipse cx="824" cy="336" rx="17" ry="57"/><ellipse cx="831" cy="497" rx="18" ry="55"/><ellipse cx="838" cy="659" rx="18" ry="55"/></g>
      </svg>
    </div>
  </main>

  <footer>
    <button class="sbtn down" aria-label="导航器"><svg width="14" height="18"><use href="#tree"/></svg></button>
    <button class="sbtn" aria-label="浏览器"><svg width="18" height="18" viewBox="0 0 18 18"><circle cx="9" cy="9" r="7" fill="#1c86c8"/><path d="M4 4c5-3 6 1 10 2-1 5-5 1-6 9-3-2-6-6-4-11z" fill="#36c55b"/><path d="M5 10h9" stroke="#0c69ad" stroke-width="2"/><path d="M2 16C-1 12 14-1 17 2c1 3-8 14-13 14" fill="none" stroke="#e5b41d" stroke-width="2"/></svg></button>
    <span class="sep"></span>
    <p class="message">将不显示旋转中心。</p>
    <span class="sep s1"></span>
    <span class="sep s2"></span>
    <svg class="lights" width="26" height="12" viewBox="0 0 26 12"><circle cx="5.500" cy="6" r="5.200" fill="#43dc49"/><circle cx="15.500" cy="6" r="3" fill="#c8cacb"/><circle cx="22.500" cy="6" r="3" fill="#c8cacb"/></svg>
    <span class="sep"></span>
    <button class="find" aria-label="查找"><svg width="18" height="16" viewBox="0 0 18 16"><path d="M3 1h3v3l1 2h4l1-2V1h3v4l2 4v6h-6V8H7v7H1V9l2-4z" fill="#151515"/><path d="M3.500 8v6M13.500 8v6M4.500 2v3M13.500 2v3" stroke="#d6d6c0" stroke-width="1.500"/></svg></button>
    <span class="sep"></span>
    <label class="filter"><select aria-label="选择过滤器"><option>智能</option></select><svg class="arr"><use href="#arrow"/></svg></label>
  </footer>
  <div class="watermark">
    <svg width="60" height="60" viewBox="0 0 60 60"><path fill-rule="evenodd" d="M42 37C42 17 21 0 8 4-4 9 4 29 22 37 6 24 2 11 11 7c11-3 26 10 29 28z" fill="#17406e"/><path fill-rule="evenodd" d="M43 22c12-5 19 5 13 17C50 53 38 62 28 57c10 1 19-7 24-18 4-10 0-15-9-17z" fill="#a01f45"/><path d="M14 50c-10-8 8-22 19-13-13-3-21 5-19 13z" fill="#a6b1c0"/><path d="M48 44c-5 9-14 15-20 12" fill="none" stroke="#e08b8b" stroke-width="3"/></svg>
    <strong>野火论坛</strong>
    <span>www.proewildfire.cn</span>
  </div>
</div>
<div class="desktop"></div>
</body>
</html>
```

FILE: styles.css
```
* { box-sizing: border-box; }

body {
  margin: 0;
  height: 100vh;
  display: flex;
  overflow: hidden;
  border-left: 1px solid #666;
  font-family: "Noto Sans CJK SC", sans-serif;
  font-size: 12px;
  color: #3c3c3c;
}

button {
  border: 0;
  background: none;
  padding: 0;
  margin: 0;
  font: inherit;
  color: inherit;
  display: flex;
  align-items: center;
  white-space: nowrap;
}

svg { display: block; flex: none; }
.defs { position: absolute; width: 0; height: 0; }
.i16 { width: 16px; height: 16px; }
.i18 { width: 18px; height: 18px; }
.i20 { width: 20px; height: 18px; }
.arr { width: 7px; height: 4px; }
.arr6 { width: 6px; height: 4px; }

.window {
  position: relative;
  flex: 1;
  min-width: 0;
  display: flex;
  flex-direction: column;
  background: #fcfcfc;
  border: 3px solid #999694;
}

.desktop {
  width: 3px;
  border-left: 1px solid #555;
  background: linear-gradient(#cfe0ff 0 16px, #1744c0 16px 32px, #fff 32px 38px, #435c13 38px 44px, #8ab41e 44px 815px, #f2d51b 815px 825px, #f47b16 825px 840px, #8ab41e 840px);
}

.titlebar {
  height: 31px;
  display: flex;
  align-items: center;
}
.quick {
  display: flex;
  align-items: center;
  gap: 8px;
  padding-left: 12px;
}
.quick .vline {
  width: 1px;
  height: 24px;
  margin: 0 -3px;
  background: #c6c6c6;
}
.quick .off { color: #999; }
.quick .customize { margin-left: 3px; }
.titlebar h1 {
  flex: 1;
  margin: 0;
  text-align: center;
  font: bold 12px "Liberation Mono", "Noto Sans CJK SC", monospace;
  color: #222;
}
.winbtns { display: flex; gap: 15px; padding-right: 10px; }

.tabs {
  height: 27px;
  display: flex;
  align-items: flex-end;
  padding-left: 4px;
}
.tab {
  height: 20px;
  margin-bottom: -1px;
  padding: 0 10px 3px 11px;
  border: 1px solid #c5c8cc;
  border-left-color: #fafafa;
  border-right-color: #d4d6d9;
  background: #eeeff2;
  font-size: 14px;
  font-weight: bold;
  line-height: 18px;
  color: #77777c;
}
.tab:nth-child(9) { border-right-color: #c5c8cc; }
.tab.file {
  margin-right: 7px;
  padding: 0 7px 3px;
  border-color: #c5c8cc;
  color: #444;
}
.tab.file .arr { color: #777; margin-left: 2px; }
.tab.active {
  position: relative;
  height: 24px;
  border-color: #c5c8cc;
  border-bottom-color: #fcfcfc;
  background: #fcfcfc;
  color: #383838;
}
.help {
  align-self: center;
  margin-left: auto;
  padding-right: 8px;
  display: flex;
  align-items: center;
  gap: 8px;
}

.ribbon {
  height: 101px;
  margin: 0 4px;
  display: flex;
  border: 1px solid #c5c8cc;
}
.group {
  display: flex;
  flex-direction: column;
  border-right: 1px solid #d3d5d8;
}
.g-op { width: 117px; }
.g-op .big { width: 51px; }
.g-get { width: 107px; }
.g-datum { width: 151px; }
.g-shape { width: 123px; }
.g-eng { width: 151px; }
.g-edit { width: 215px; }
.g-surf { width: 111px; }
.g-intent { width: 71px; }
.body { flex: 1; display: flex; }
.body.pad { padding-left: 7px; }
.body.center { justify-content: center; }
.col { padding-top: 2px; }
.col + .col { margin-left: 8px; }
.col button { height: 24px; gap: 3px; line-height: 24px; }
.col .arr { margin-left: 5px; }
.off { color: #9c9c9c; }
.off .on { color: #3c3c3c; }
.big {
  width: 48px;
  flex-direction: column;
  padding-top: 5px;
  line-height: 13px;
  text-align: center;
}
.big > svg { width: 32px; height: 33px; }
.big > span { margin-top: 7px; }
.big .arr { display: inline-block; vertical-align: 2px; }
.caption {
  height: 22px;
  padding-bottom: 2px;
  justify-content: center;
  gap: 6px;
  border-top: 1px solid #c5c8cc;
  background: #eeeff2;
}

main { flex: 1; min-height: 0; display: flex; }
aside {
  width: 284px;
  padding: 13px 1px 11px 4px;
  display: flex;
  flex-direction: column;
}
.side-tabs { display: flex; }
.side-tabs button {
  width: 30px;
  height: 29px;
  justify-content: center;
  border: 1px solid #c5c8cc;
  border-left: 0;
  background: #eeeff2;
}
.side-tabs .active {
  position: relative;
  height: 30px;
  margin-bottom: -1px;
  border-left: 1px solid #c5c8cc;
  border-bottom: 0;
  background: #fcfcfc;
}
.panel {
  flex: 1;
  border: solid #c5c8cc;
  border-width: 1px 3px 2px 1px;
}
.panel-head {
  height: 29px;
  display: flex;
  align-items: center;
  gap: 11px;
  padding: 0 4px 2px 20px;
  border-bottom: 1px solid #c5c8cc;
}
.panel-head h2 {
  flex: 1;
  margin: 0;
  font-size: 13px;
  line-height: 18px;
}
.panel-head button { gap: 9px; }

.tree {
  margin: 0;
  padding: 0;
  list-style: none;
  font: 10px "Liberation Mono", "Noto Sans CJK SC", monospace;
}
.tree li {
  height: 16px;
  display: flex;
  align-items: center;
  gap: 2px;
  padding-left: 24px;
}
.tree .root { padding-left: 4px; }
.tree span { background: #fff; line-height: 16px; }
.tree em { font-size: 12px; font-style: normal; }
.tree .more { padding-left: 10px; }
.tree .more::before {
  content: "";
  margin-right: 5px;
  border: solid transparent;
  border-width: 4px 0 4px 7px;
  border-left-color: #858585;
}

.viewport {
  flex: 1;
  margin-right: 4px;
  padding-top: 7px;
  display: flex;
  flex-direction: column;
  align-items: center;
  background: linear-gradient(#005c9d, #003968 50%, #001030);
}
.viewbar {
  width: 284px;
  height: 28px;
  padding: 0 4px;
  display: flex;
  border: 1px solid #c5c8cc;
  background: #eeeff2;
}
.viewbar button {
  flex: 1;
  justify-content: center;
  border-left: 1px solid #c5c8cc;
  background: #fff;
}
.viewbar button:last-child { border-right: 1px solid #c5c8cc; }
.viewbar .boxed {
  border: 1px solid #b9bbc0;
  background: #f5f5f5;
}
.viewbar .pressed {
  border: 1px solid #a5a7ab;
  border-top-width: 2px;
  background: #e8e8ea;
}
.views { position: relative; }
.views span {
  position: absolute;
  top: 4px;
  right: 4px;
  font: 10px "Liberation Mono", monospace;
}
.die { width: 336px; height: 330px; margin-top: 123px; }

footer {
  height: 33px;
  display: flex;
  align-items: center;
  padding: 0 18px 0 6px;
  border-top: 2px solid #999694;
  background: #eeeff2;
}
.sep {
  width: 3px;
  height: 24px;
  border-left: 1px solid #ccced1;
  border-right: 1px solid #fff;
}
.sbtn {
  width: 22px;
  height: 22px;
  margin-right: 4px;
  justify-content: center;
  border: 1px solid #c5c8cc;
  background: #f6f6f7;
  color: #173d7b;
}
.sbtn.down {
  border-top: 2px solid #989898;
  background: #e8e8ea;
}
.sbtn + .sep { margin-left: 5px; }
.message {
  flex: 1;
  display: flex;
  align-items: center;
  gap: 5px;
  margin: 0 0 3px 5px;
  font-size: 11px;
}
.message::before {
  content: "";
  width: 5px;
  height: 5px;
  border-radius: 50%;
  background: #00f;
}
.s1 { margin-right: 33px; }
.lights { margin: 0 2px; }
.find {
  width: 40px;
  height: 22px;
  margin: 0 2px 0 1px;
  justify-content: center;
  border: 1px solid #aeb0b4;
  border-radius: 3px;
  background: linear-gradient(#fff, #e2e3e6);
}
.filter {
  width: 166px;
  margin-left: 95px;
  display: grid;
  align-items: center;
}
.filter select,
.filter svg { grid-area: 1 / 1; }
.filter select {
  appearance: none;
  width: 100%;
  height: 19px;
  padding: 0 5px;
  border: 1px solid #c0c2c6;
  background: linear-gradient(90deg, #f6f6f7 0 150px, #c0c2c6 150px 151px, #eeeff2 151px);
  font: inherit;
  line-height: 17px;
  color: #111;
}
.filter svg { justify-self: end; margin-right: 4px; color: #123; }

.watermark {
  position: absolute;
  right: 0;
  bottom: 2px;
  width: 205px;
  height: 62px;
  display: grid;
  grid-template-columns: 58px 1fr;
  grid-template-rows: 39px 1fr;
  background: rgba(255, 255, 250, .35);
  pointer-events: none;
}
.watermark svg { grid-row: 1 / 3; opacity: .75; }
.watermark strong {
  padding-left: 12px;
  font-size: 29px;
  line-height: 39px;
  color: #07543f;
}
.watermark span {
  font: 15px/20px "Open Sans", sans-serif;
  color: rgba(130, 205, 200, .6);
}
```
